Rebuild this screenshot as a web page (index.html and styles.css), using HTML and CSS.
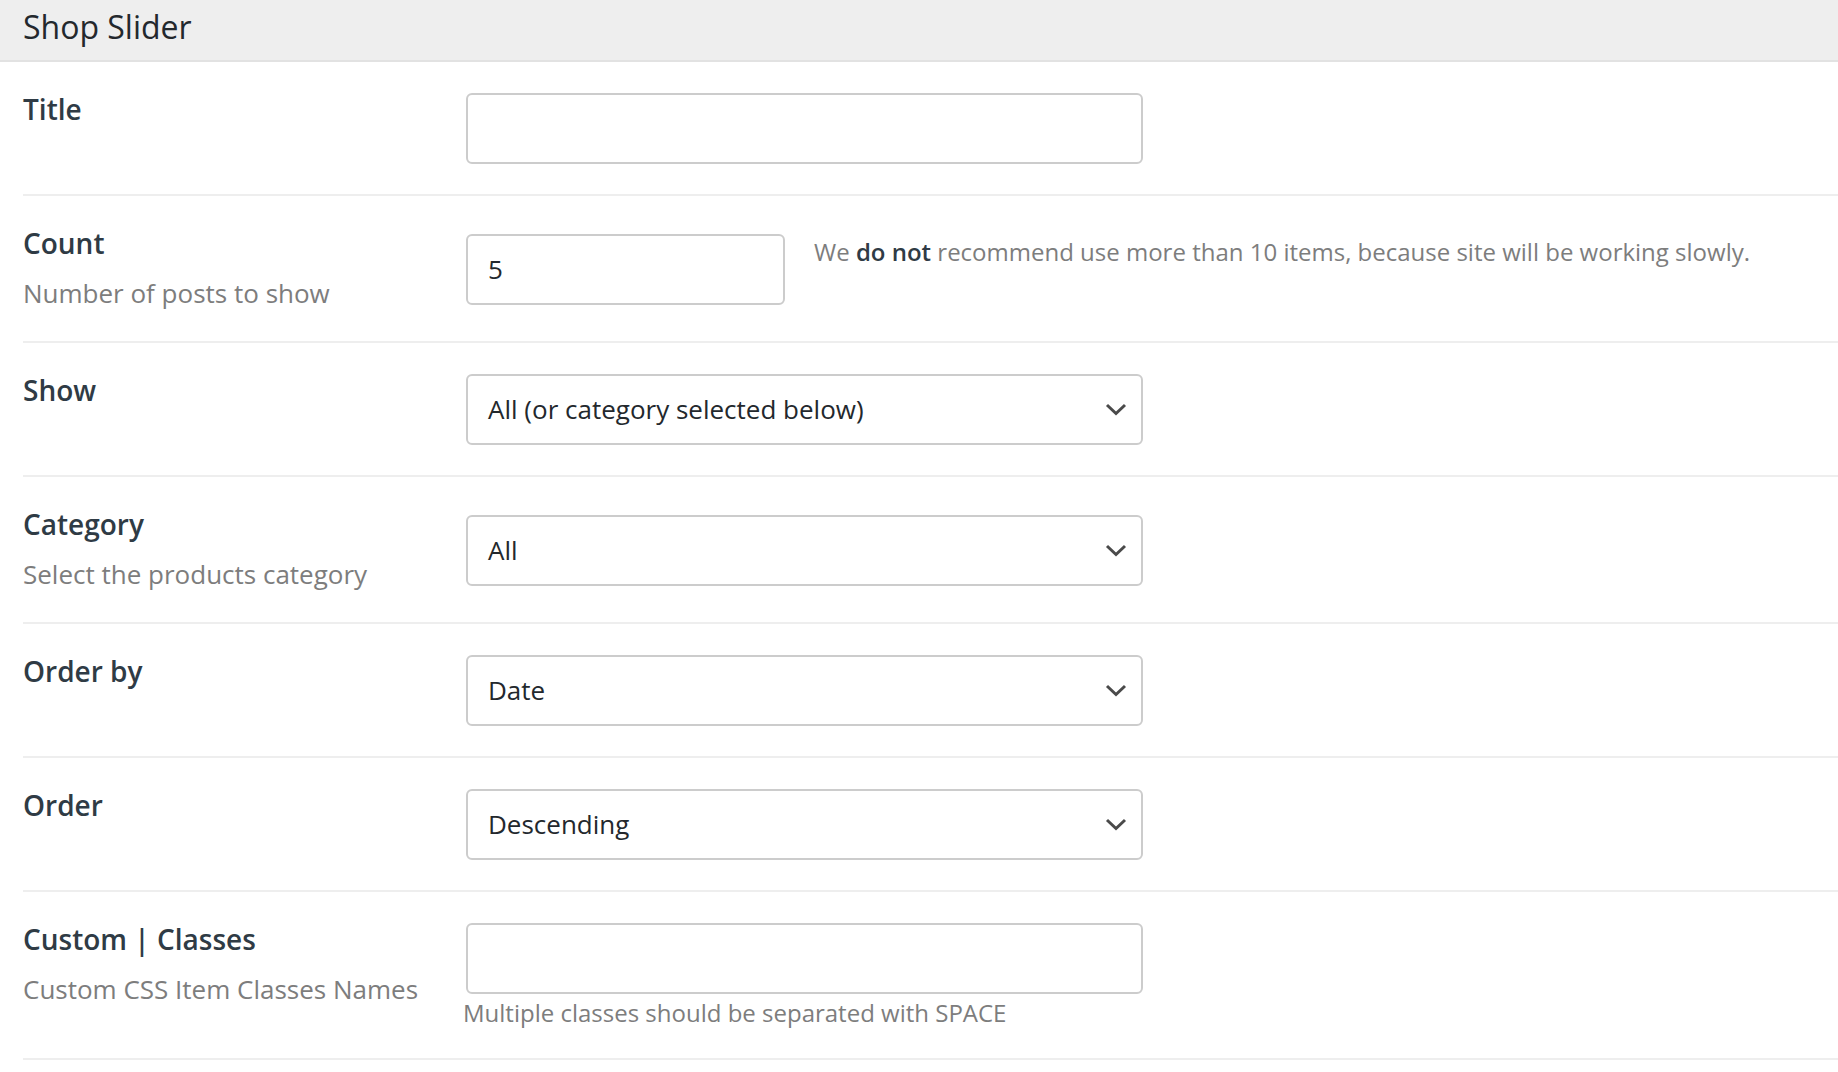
FILE: index.html
```html
<!DOCTYPE html>
<html lang="en">
<head>
<meta charset="utf-8">
<title>Shop Slider</title>
<link rel="stylesheet" href="styles.css">
</head>
<body>
<div class="panel">
  <div class="panel-header">Shop Slider</div>
  <div class="form">
    <div class="row">
      <div class="label-col">
        <div class="label">Title</div>
      </div>
      <div class="field-col">
        <div class="input wide"></div>
      </div>
    </div>
    <div class="row with-desc">
      <div class="label-col">
        <div class="label">Count</div>
        <div class="desc">Number of posts to show</div>
      </div>
      <div class="field-col inline">
        <div class="input narrow">5</div>
        <div class="note">We <b>do not</b> recommend use more than 10 items, because site will be working slowly.</div>
      </div>
    </div>
    <div class="row">
      <div class="label-col">
        <div class="label">Show</div>
      </div>
      <div class="field-col">
        <div class="input wide select"><span>All (or category selected below)</span><svg class="chev" width="22" height="13" viewBox="0 0 22 13"><path d="M2 2 L11 10.5 L20 2" fill="none" stroke="#4a4a4a" stroke-width="3"/></svg></div>
      </div>
    </div>
    <div class="row with-desc">
      <div class="label-col">
        <div class="label">Category</div>
        <div class="desc">Select the products category</div>
      </div>
      <div class="field-col">
        <div class="input wide select"><span>All</span><svg class="chev" width="22" height="13" viewBox="0 0 22 13"><path d="M2 2 L11 10.5 L20 2" fill="none" stroke="#4a4a4a" stroke-width="3"/></svg></div>
      </div>
    </div>
    <div class="row">
      <div class="label-col">
        <div class="label">Order by</div>
      </div>
      <div class="field-col">
        <div class="input wide select"><span>Date</span><svg class="chev" width="22" height="13" viewBox="0 0 22 13"><path d="M2 2 L11 10.5 L20 2" fill="none" stroke="#4a4a4a" stroke-width="3"/></svg></div>
      </div>
    </div>
    <div class="row">
      <div class="label-col">
        <div class="label">Order</div>
      </div>
      <div class="field-col">
        <div class="input wide select"><span>Descending</span><svg class="chev" width="22" height="13" viewBox="0 0 22 13"><path d="M2 2 L11 10.5 L20 2" fill="none" stroke="#4a4a4a" stroke-width="3"/></svg></div>
      </div>
    </div>
    <div class="row last">
      <div class="label-col">
        <div class="label">Custom | Classes</div>
        <div class="desc">Custom CSS Item Classes Names</div>
      </div>
      <div class="field-col">
        <div class="input wide"></div>
        <div class="hint">Multiple classes should be separated with SPACE</div>
      </div>
    </div>
  </div>
</div>
</body>
</html>
```

FILE: styles.css
```css
html, body {
  margin: 0;
  padding: 0;
  background: #ffffff;
}
body {
  font-family: "Open Sans", "Noto Sans", sans-serif;
  color: #32373c;
}
.panel-header {
  height: 60px;
  background: #eeeeee;
  border-bottom: 2px solid #e2e2e2;
  padding-left: 23px;
  font-size: 32px;
  line-height: 54px;
  color: #23282d;
  box-sizing: content-box;
}
.form {
  padding-left: 23px;
}
.row {
  display: flex;
  border-bottom: 2px solid #eeeeee;
  padding: 31px 0 30px 0;
}
.row.with-desc {
  padding-top: 31px;
  padding-bottom: 30px;
}
.row.with-desc .field-col {
  padding-top: 7px;
}
.row.last {
  padding-bottom: 29px;
}
.label-col {
  width: 443px;
  flex: none;
}
.label {
  font-weight: 600;
  font-size: 28px;
  line-height: 32px;
  color: #2f3b45;
}
.desc {
  font-size: 26px;
  line-height: 36px;
  color: #7d7d7d;
  margin-top: 16px;
}
.field-col {
  flex: none;
}
.field-col.inline {
  display: flex;
  align-items: flex-start;
}
.input {
  box-sizing: border-box;
  height: 71px;
  border: 2px solid #cccccc;
  border-radius: 6px;
  background: #ffffff;
  padding: 0 20px;
  font-size: 26px;
  line-height: 67px;
  color: #23282d;
}
.input.wide {
  width: 677px;
}
.input.narrow {
  width: 319px;
}
.select {
  display: flex;
  align-items: center;
  justify-content: space-between;
  padding-right: 14px;
}
.chev {
  display: block;
}
.note {
  margin-left: 29px;
  margin-top: 2px;
  font-size: 24px;
  line-height: 32px;
  color: #7d7d7d;
}
.note b {
  font-weight: 600;
  color: #2f3b45;
}
.hint {
  margin-left: -3px;
  margin-top: 3px;
  font-size: 24px;
  line-height: 32px;
  color: #7d7d7d;
}
```
